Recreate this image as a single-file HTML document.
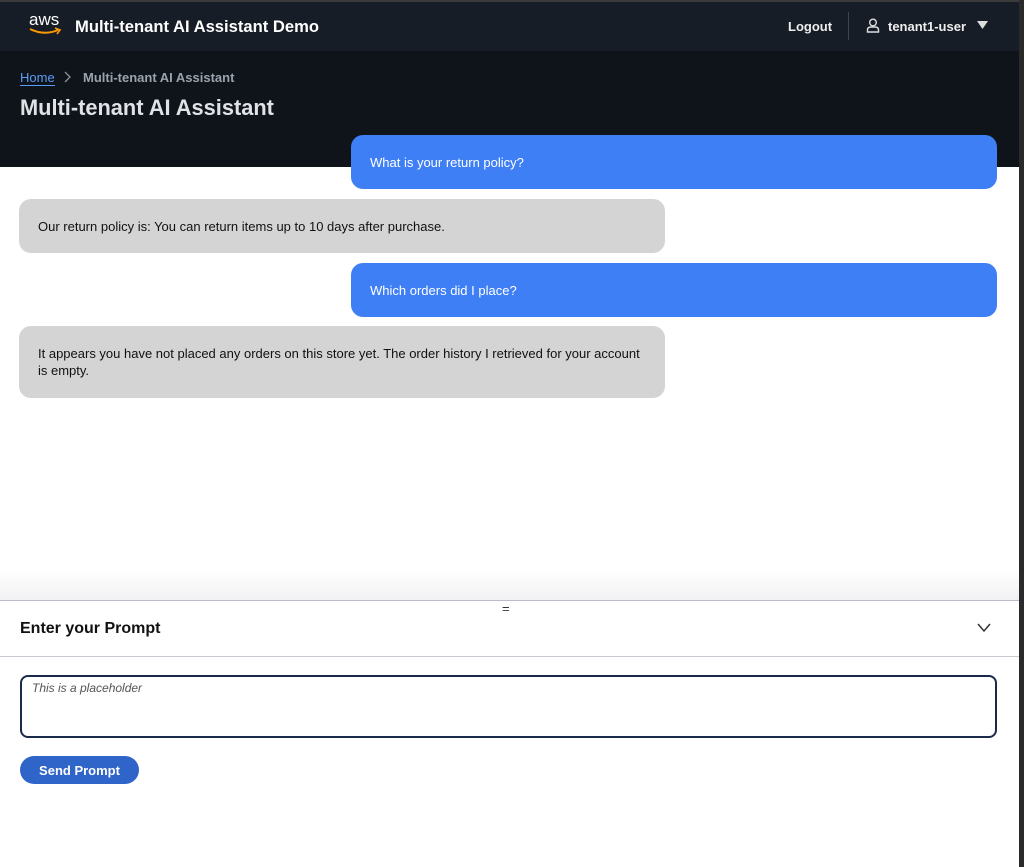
<!DOCTYPE html>
<html><head><meta charset="utf-8"><style>
*{box-sizing:border-box;margin:0;padding:0}
body{width:1024px;height:867px;overflow:hidden;background:#fff;font-family:"Liberation Sans",sans-serif;position:relative}
.top{position:absolute;left:0;top:0;width:1024px;height:51px;background:#161d26;border-top:2px solid #3b3b3b}
.hero{position:absolute;left:0;top:51px;width:1024px;height:116px;background:#0f141a}
.rs{position:absolute;right:0;top:0;width:5px;height:867px;background:#2a2a2a}
.t{position:absolute;white-space:nowrap}
.b{position:absolute;border-radius:12px;font-size:13px;padding:0 19px;display:flex;align-items:center;line-height:17px}
.u{background:#3f7ff6;color:#fff;left:351px;width:646px}
.a{background:#d4d4d4;color:#111;left:19px;width:646px}
</style></head><body>
<div class="top"></div>
<div class="hero"></div>
<div class="t" style="left:29px;top:10px;color:#fff;font-size:17px">aws</div>
<svg style="position:absolute;left:28px;top:27px" width="36" height="10"><path d="M2 2 Q16 9 30 3" stroke="#f90" stroke-width="2" fill="none"/><path d="M27 1 L32 3 L29 7" stroke="#f90" stroke-width="1.6" fill="none"/></svg>
<div class="t" style="left:75px;top:17px;color:#fff;font-size:16.6px;font-weight:bold">Multi-tenant AI Assistant Demo</div>
<div class="t" style="left:788px;top:19px;color:#eee;font-size:13px;font-weight:bold">Logout</div>
<div style="position:absolute;left:848px;top:12px;width:1px;height:28px;background:#3d4550"></div>
<svg style="position:absolute;left:866px;top:18px" width="14" height="15"><circle cx="7" cy="4.5" r="3.3" stroke="#ddd" stroke-width="1.4" fill="none"/><path d="M1.5 14 V12 Q1.5 9 5 9 H9 Q12.5 9 12.5 12 V14 Z" stroke="#ddd" stroke-width="1.4" fill="none"/></svg>
<div class="t" style="left:888px;top:19px;color:#eee;font-size:13px;font-weight:bold">tenant1-user</div>
<svg style="position:absolute;left:977px;top:21px" width="11" height="9"><path d="M0 0H11L5.5 8Z" fill="#ddd"/></svg>
<div class="t" style="left:20px;top:70px;color:#5b9cf5;font-size:13px;border-bottom:1px solid #5b9cf5;line-height:15px">Home</div>
<svg style="position:absolute;left:64px;top:71px" width="8" height="12"><path d="M1 1L6 6L1 11" stroke="#8a93a0" stroke-width="1.3" fill="none"/></svg>
<div class="t" style="left:83px;top:70px;color:#9aa3ad;font-size:13px;font-weight:bold">Multi-tenant AI Assistant</div>
<div class="t" style="left:20px;top:95px;color:#dfe2e6;font-size:21.8px;font-weight:bold">Multi-tenant AI Assistant</div>
<div class="b u" style="top:135px;height:54px">What is your return policy?</div>
<div class="b a" style="top:199px;height:54px">Our return policy is: You can return items up to 10 days after purchase.</div>
<div class="b u" style="top:263px;height:54px">Which orders did I place?</div>
<div class="b a" style="top:326px;height:72px">It appears you have not placed any orders on this store yet. The order history I retrieved for your account is empty.</div>
<div style="position:absolute;left:0;top:570px;width:1019px;height:30px;background:linear-gradient(#fff,#f1f1f3)"></div>
<div style="position:absolute;left:0;top:600px;width:1019px;height:1px;background:#b8bcc6"></div>
<div class="t" style="left:502px;top:601px;font-size:13px;color:#333">=</div>
<div class="t" style="left:20px;top:620px;font-size:16px;font-weight:bold;color:#111">Enter your Prompt</div>
<svg style="position:absolute;left:977px;top:623px" width="14" height="10"><path d="M1 1L7 8L13 1" stroke="#333" stroke-width="1.5" fill="none"/></svg>
<div style="position:absolute;left:0;top:656px;width:1019px;height:1px;background:#c6c9d0"></div>
<div style="position:absolute;left:20px;top:675px;width:977px;height:63px;border:2px solid #1b2a4a;border-radius:8px"></div>
<div class="t" style="left:32px;top:681px;font-size:12px;font-style:italic;color:#555">This is a placeholder</div>
<div style="position:absolute;left:20px;top:756px;width:119px;height:28px;background:#2f64c9;border-radius:14px;color:#fff;font-size:13px;font-weight:bold;display:flex;align-items:center;justify-content:center">Send Prompt</div>
<div class="rs"></div>
</body></html>
